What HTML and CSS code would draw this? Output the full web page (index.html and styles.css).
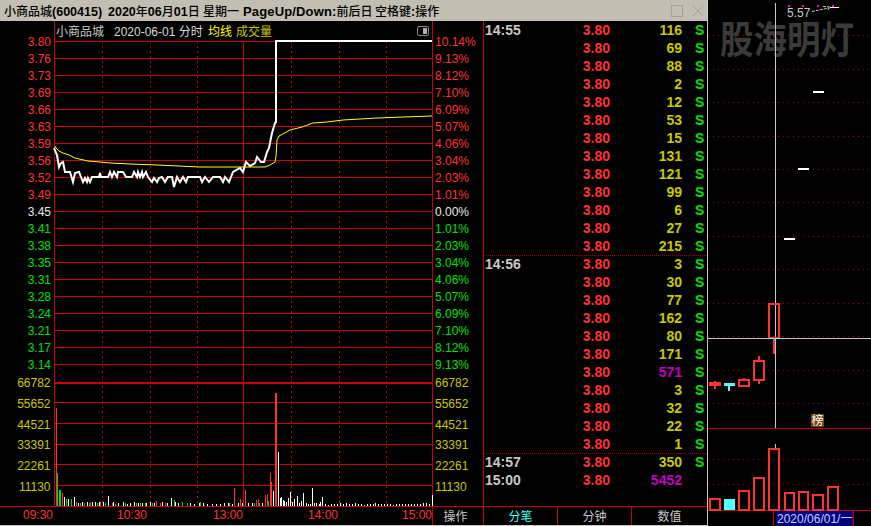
FILE: index.html
```html
<!DOCTYPE html>
<html lang="zh">
<head>
<meta charset="utf-8">
<title>小商品城 分时</title>
<link rel="stylesheet" href="styles.css">
</head>
<body>
<div class="app">
  <div class="win">
    <header class="titlebar">
      <div class="title">
        <div><span>小商品城</span><b>(600415)</b></div>
        <div><b>2020</b><span>年</span><b>06</b><span>月</span><b>01</b><span>日</span></div>
        <div><span>星期一</span></div>
        <div><b class="wide">PageUp/Down:</b><span>前后日</span></div>
        <div><span>空格键</span><b>:</b><span>操作</span></div>
      </div>
      <div class="winbtns">
        <svg class="btn" viewBox="0 0 12 12"><rect x="0.5" y="0.5" width="11" height="11"/></svg>
        <svg class="btn" viewBox="0 0 12 12"><path d="M0.5 0.5L11.5 11.5M11.5 0.5L0.5 11.5"/></svg>
      </div>
    </header>
    <div class="body">
      <svg class="chart" viewBox="0 21 483 486" width="483" height="486">
        <g class="grid">
          <path d="M54 41H432M54 58H432M54 75H432M54 92H432M54 109H432M54 126H432M54 143H432M54 160H432M54 177H432M54 194H432M54 211H432M54 228H432M54 245H432M54 262H432M54 279H432M54 296H432M54 313H432M54 330H432M54 347H432M54 364H432"/>
          <path d="M54 402H432M54 423H432M54 444H432M54 464H432M54 485H432"/>
          <path class="thick" d="M54 383H432"/>
          <path d="M54 21V506M432 21V506M243 41V506M0 506H484"/>
          <path class="dots" d="M102 41V506M150 41V506M197 41V506M291 41V506M339 41V506M386 41V506"/>
        </g>
        <g class="head">
          <text x="56" y="36" class="lt">小商品城</text>
          <text x="114" y="36" class="wh">2020-06-01 分时</text>
          <text x="208" y="36" class="ye">均线</text>
          <text x="236" y="36" class="ol">成交量</text>
        </g>
        <g class="toggle"><rect x="417.500" y="26.500" width="11" height="9" rx="1.500"/><rect class="fill" x="423" y="28" width="4" height="6"/></g>
        <g class="axis left">
          <g class="red">
            <text x="51" y="46">3.80</text><text x="51" y="63">3.76</text><text x="51" y="80">3.73</text><text x="51" y="97">3.69</text><text x="51" y="114">3.66</text><text x="51" y="131">3.63</text><text x="51" y="148">3.59</text><text x="51" y="165">3.56</text><text x="51" y="182">3.52</text><text x="51" y="199">3.49</text>
          </g>
          <text x="51" y="216" class="white">3.45</text>
          <g class="green">
            <text x="51" y="233">3.41</text><text x="51" y="250">3.38</text><text x="51" y="267">3.35</text><text x="51" y="284">3.31</text><text x="51" y="301">3.28</text><text x="51" y="318">3.24</text><text x="51" y="335">3.21</text><text x="51" y="352">3.17</text><text x="51" y="369">3.14</text>
          </g>
          <g class="olive">
            <text x="50.500" y="387">66782</text><text x="50.500" y="408">55652</text><text x="50.500" y="429">44521</text><text x="50.500" y="449">33391</text><text x="50.500" y="470">22261</text><text x="50.500" y="491">11130</text>
          </g>
        </g>
        <g class="axis right">
          <g class="red">
            <text x="435" y="46">10.14%</text><text x="435" y="63">9.13%</text><text x="435" y="80">8.12%</text><text x="435" y="97">7.10%</text><text x="435" y="114">6.09%</text><text x="435" y="131">5.07%</text><text x="435" y="148">4.06%</text><text x="435" y="165">3.04%</text><text x="435" y="182">2.03%</text><text x="435" y="199">1.01%</text>
          </g>
          <text x="435" y="216" class="white">0.00%</text>
          <g class="green">
            <text x="435" y="233">1.01%</text><text x="435" y="250">2.03%</text><text x="435" y="267">3.04%</text><text x="435" y="284">4.06%</text><text x="435" y="301">5.07%</text><text x="435" y="318">6.09%</text><text x="435" y="335">7.10%</text><text x="435" y="352">8.12%</text><text x="435" y="369">9.13%</text>
          </g>
          <g class="olive">
            <text x="435" y="387">66782</text><text x="435" y="408">55652</text><text x="435" y="429">44521</text><text x="435" y="449">33391</text><text x="435" y="470">22261</text><text x="435" y="491">11130</text>
          </g>
        </g>
        <path class="avg" d="M55 146L56 148L59 151L63 153L69 155L75 158L88 161L100 162L110 163L130 164L157 165L200 167L240 167L265 167L270 165L275 162L276 156L277 140L279 136L281 135L290 130L302 127L313 123L327 122L343 120L377 118L403 117L432 116"/>
        <path class="price" d="M54 148L57 155L59 167L61 163L63 162L65 172L70 172L73 182L75 173L79 172L83 182L85 178L87 182L88 178L90 182L92 177L99 177L100 173L101 177L108 177L110 172L112 177L114 172L117 177L118 172L123 172L126 177L132 177L134 172L137 177L138 172L140 177L142 172L143 177L146 172L148 177L152 182L154 178L157 182L159 178L162 177L165 182L168 177L172 177L174 187L177 177L180 182L183 177L186 182L188 177L200 177L202 182L205 177L209 182L213 177L220 177L223 182L225 177L229 182L233 172L240 168L243 172L246 162L250 166L255 163L257 157L261 162L264 162L267 152L269 148L272 133L275 123L276 122L276 41L432 41"/>
        <path class="vol-red" d="M56 506V408M62 506V493M76 506V502M84 506V503M90 506V502M100 506V502M112 506V503M156 506V501M160 506V503M165 506V503M234 506V488M240 506V499M245 506V490M256 506V500M258 506V499M265 506V495M267 506V494M270 506V473M271 506V482M275 506V492"/>
        <path class="vol-red wide" d="M276 506V393"/>
        <path class="vol-green" d="M57 506V473M59 506V490M60 506V490M66 506V499M71 506V499M80 506V503M89 506V503M97 506V503M105 506V503M115 506V504M125 506V503M136 506V503M140 506V503M145 506V503M152 506V503M174 506V500M182 506V502M187 506V503M200 506V502M229 506V503M254 506V503M259 506V503M268 506V501"/>
        <path class="vol-white" d="M64 506V497M68 506V499M74 506V497M78 506V503M82 506V502M87 506V502M92 506V502M95 506V502M99 506V502M103 506V502M108 506V496M113 506V502M118 506V503M123 506V502M127 506V504M130 506V503M134 506V502M138 506V503M142 506V503M146 506V503M150 506V502M154 506V503M162 506V502M167 506V503M171 506V498M175 506V502M178 506V503M190 506V503M194 506V504M199 506V503M203 506V503M207 506V504M212 506V504M216 506V504M220 506V504M224 506V503M228 506V503M232 506V504M238 506V503M242 506V503M248 506V503M252 506V503M262 506V503M273 506V491M278 506V452M280 506V498M281 506V497M283 506V500M284 506V501M286 506V502M288 506V498M290 506V492M292 506V502M294 506V499M297 506V496M299 506V503M301 506V501M303 506V493M306 506V503M308 506V504M310 506V504M312 506V488M314 506V503M316 506V503M319 506V504M320 506V502M322 506V497M325 506V504M328 506V505M331 506V504M334 506V504M337 506V504M340 506V503M343 506V504M346 506V503M349 506V504M352 506V504M355 506V503M358 506V504M361 506V504M364 506V505M367 506V504M370 506V504M373 506V504M375 506V503M378 506V504M381 506V504M384 506V504M387 506V504M390 506V504M393 506V505M396 506V504M399 506V504M402 506V504M405 506V504M408 506V504M411 506V504M414 506V504M417 506V504M420 506V504M423 506V503M426 506V503M429 506V504M432 506V495"/>
      </svg>
      <div class="ticks">
        <div class="row"><span class="time">14:55</span><span class="pr">3.80</span><span class="vo">116</span><span class="s">S</span></div>
        <div class="row"><span class="time"></span><span class="pr">3.80</span><span class="vo">69</span><span class="s">S</span></div>
        <div class="row"><span class="time"></span><span class="pr">3.80</span><span class="vo">88</span><span class="s">S</span></div>
        <div class="row"><span class="time"></span><span class="pr">3.80</span><span class="vo">2</span><span class="s">S</span></div>
        <div class="row"><span class="time"></span><span class="pr">3.80</span><span class="vo">12</span><span class="s">S</span></div>
        <div class="row"><span class="time"></span><span class="pr">3.80</span><span class="vo">53</span><span class="s">S</span></div>
        <div class="row"><span class="time"></span><span class="pr">3.80</span><span class="vo">15</span><span class="s">S</span></div>
        <div class="row"><span class="time"></span><span class="pr">3.80</span><span class="vo">131</span><span class="s">S</span></div>
        <div class="row"><span class="time"></span><span class="pr">3.80</span><span class="vo">121</span><span class="s">S</span></div>
        <div class="row"><span class="time"></span><span class="pr">3.80</span><span class="vo">99</span><span class="s">S</span></div>
        <div class="row"><span class="time"></span><span class="pr">3.80</span><span class="vo">6</span><span class="s">S</span></div>
        <div class="row"><span class="time"></span><span class="pr">3.80</span><span class="vo">27</span><span class="s">S</span></div>
        <div class="row"><span class="time"></span><span class="pr">3.80</span><span class="vo">215</span><span class="s">S</span></div>
        <div class="row sep"><span class="time">14:56</span><span class="pr">3.80</span><span class="vo">3</span><span class="s">S</span></div>
        <div class="row"><span class="time"></span><span class="pr">3.80</span><span class="vo">30</span><span class="s">S</span></div>
        <div class="row"><span class="time"></span><span class="pr">3.80</span><span class="vo">77</span><span class="s">S</span></div>
        <div class="row"><span class="time"></span><span class="pr">3.80</span><span class="vo">162</span><span class="s">S</span></div>
        <div class="row"><span class="time"></span><span class="pr">3.80</span><span class="vo">80</span><span class="s">S</span></div>
        <div class="row"><span class="time"></span><span class="pr">3.80</span><span class="vo">171</span><span class="s">S</span></div>
        <div class="row"><span class="time"></span><span class="pr">3.80</span><span class="vo big">571</span><span class="s">S</span></div>
        <div class="row"><span class="time"></span><span class="pr">3.80</span><span class="vo">3</span><span class="s">S</span></div>
        <div class="row"><span class="time"></span><span class="pr">3.80</span><span class="vo">32</span><span class="s">S</span></div>
        <div class="row"><span class="time"></span><span class="pr">3.80</span><span class="vo">22</span><span class="s">S</span></div>
        <div class="row"><span class="time"></span><span class="pr">3.80</span><span class="vo">1</span><span class="s">S</span></div>
        <div class="row sep"><span class="time">14:57</span><span class="pr">3.80</span><span class="vo">350</span><span class="s">S</span></div>
        <div class="row"><span class="time">15:00</span><span class="pr">3.80</span><span class="vo big">5452</span><span class="s"></span></div>
      </div>
    </div>
    <footer class="footer">
      <div class="times"><span>09:30</span><span>10:30</span><span>13:00</span><span>14:00</span><span>15:00</span></div>
      <div class="tab op">操作</div>
      <div class="tab active">分笔</div>
      <div class="tab">分钟</div>
      <div class="tab">数值</div>
    </footer>
  </div>
  <svg class="kline" viewBox="708 0 163 526" width="163" height="526">
    <path class="kdots" d="M708 35H871M708 69H871M708 102H871M708 136H871M708 169H871M708 202H871M708 236H871M708 269H871M708 303H871M708 336H871M708 370H871M708 403H871M708 459H871M708 484H871"/>
    <text class="mark" transform="translate(720 53) scale(1 1.12)">股海明灯</text>
    <path class="cross" d="M775.500 3V428M775.500 444V449M708 338.500H871"/>
    <path class="solid" d="M708 428.500H871M708 510.500H871M773.500 510V526M853.500 510V526"/>
    <text class="hi" x="787" y="17">5.57</text>
    <path class="arrow" d="M812 11.500L829 8M823 6.500L830 7L827 11"/>
    <path class="dash thin" d="M830 7.500H839"/>
    <path class="pin" d="M788 5h2v2h-2zM802 5h2v2h-2zM817 5h2v2h-2zM832 5h2v2h-2z"/>
    <path class="dash" d="M813 91.500H824M798 168.500H809M784 238.500H795"/>
    <path class="can-solid" d="M709 382h12v4h-12zM714 381h2v8h-2z"/>
    <path class="can-cyan" d="M724 383h11v3h-11zM728 386h2v5h-2z"/>
    <path class="can" d="M739 380h10v6h-10zM744 378v2M744 386v1M754 361h10v19h-10zM759 356v5M759 380v4M769 304h10v34h-10zM774 338v16"/>
    <path class="cyan-line" d="M768 338.500H780"/>
    <g class="badge"><rect x="811" y="414" width="13" height="13"/><text x="817.500" y="425">榜</text></g>
    <path class="can" d="M710 499h10v11h-10zM739 491h10v19h-10zM754 478h10v32h-10zM769 449h10v61h-10zM785 493h9v17h-9zM799 492h9v18h-9zM813 495h10v15h-10zM828 487h10v23h-10z"/>
    <rect class="can-fill" x="724" y="499" width="11" height="11"/>
    <rect class="datebox" x="776" y="511" width="77" height="15"/>
    <text class="date" x="777" y="523">2020/06/01/一</text>
  </svg>
</div>
</body>
</html>
```
FILE: styles.css
```css
html, body { margin: 0; padding: 0; background: #000; }
body { width: 871px; height: 526px; overflow: hidden; font-family: "Liberation Sans", "Noto Sans CJK SC", sans-serif; }
.app { display: flex; width: 871px; height: 526px; background: #000; }
.win { width: 707px; flex: none; display: flex; flex-direction: column; }
.titlebar { height: 21px; flex: none; background: #c2beb2; display: flex; justify-content: space-between; align-items: center; color: #000; }
.title { padding-left: 4px; display: grid; grid-template-columns: 104px 95px 40px 132px 70px; font-size: 12px; white-space: nowrap; font-family: "Noto Sans CJK SC", sans-serif; font-weight: 500; }
.title b { font-family: "Liberation Sans", sans-serif; font-weight: 700; font-size: 12.5px; }
.title b.wide { font-size: 13px; letter-spacing: 0.15px; }
.winbtns { display: flex; gap: 9px; padding-right: 3px; }
.btn { width: 12px; height: 12px; display: block; }
.btn rect, .btn path { fill: none; stroke: #a5a199; stroke-width: 1; }
.body { display: flex; height: 486px; flex: none; }
.chart { display: block; flex: none; }
.grid path { fill: none; stroke: #c80000; stroke-width: 1; shape-rendering: crispEdges; }
.grid .thick { stroke-width: 2; }
.grid .dots { stroke-dasharray: 2 3; }
.head text { font-size: 12px; font-family: "Noto Sans CJK SC", sans-serif; }
.head .wh { font-family: "Liberation Sans", "Noto Sans CJK SC", sans-serif; fill: #d8d8d8; }
.head .lt { fill: #c8c8c8; }
.head .ye { fill: #ffff00; }
.head .ol { fill: #c8c800; }
.toggle rect { fill: none; stroke: #8a8a8a; }
.toggle .fill { fill: #b0b0b0; stroke: none; }
.axis text { font-size: 12px; }
.axis.left text { text-anchor: end; }
.axis .red text { fill: #ff3232; }
.axis .green text { fill: #00e000; }
.axis .olive text { fill: #c8c800; }
.axis .white { fill: #e8e8e8; }
.avg { fill: none; stroke: #ffff00; stroke-width: 1; }
.price { fill: none; stroke: #fff; stroke-width: 2; stroke-linejoin: miter; }
.vol-red, .vol-green, .vol-white { fill: none; stroke-width: 1; shape-rendering: crispEdges; }
.vol-red { stroke: #ff3232; }
.vol-red.wide { stroke-width: 2; }
.vol-green { stroke: #00e000; }
.vol-white { stroke: #fff; }
.ticks { width: 224px; flex: none; box-sizing: border-box; border-left: 1px solid #c80000; border-bottom: 1px solid #c80000; font-weight: 700; font-size: 14px; }
.row { display: grid; grid-template-columns: 41px 84px 72px 21px; height: 18px; line-height: 18px; box-sizing: border-box; padding-left: 1px; }
.row.sep { border-top: 1px dotted #a00000; line-height: 17px; }
.time { color: #c8c8c8; }
.pr { color: #ff3232; text-align: right; }
.vo { color: #c8c800; text-align: right; }
.vo.big { color: #c000c0; }
.s { color: #00e000; padding-left: 13px; }
.footer { display: flex; height: 18px; flex: none; border-bottom: 1px solid #c8c8c8; box-sizing: content-box; font-size: 12px; line-height: 17px; }
.times { width: 432px; flex: none; display: grid; grid-template-columns: 53px 94px 96px 95px 94px; color: #ff3232; font-size: 12px; }
.times span { text-align: right; }
.tab { width: 74px; flex: none; box-sizing: border-box; border-right: 1px solid #c80000; color: #c8c8c8; text-align: center; font-family: "Noto Sans CJK SC", sans-serif; font-size: 12px; }
.tab.op { width: 52px; border-left: 1px solid #c80000; padding-right: 5px; }
.tab.active { color: #40ffff; }
.tab:last-child { width: 75px; border-right: 0; }
.kline { display: block; flex: none; border-left: 1px solid #c8c8c8; }
.kdots { fill: none; stroke: #a00000; stroke-dasharray: 1 4; shape-rendering: crispEdges; }
.mark { font-family: "Noto Sans CJK SC", sans-serif; font-weight: 700; font-size: 33.500px; fill: #3a3a3a; }
.cross { fill: none; stroke: #c8c8c8; stroke-width: 1; shape-rendering: crispEdges; }
.solid { fill: none; stroke: #c80000; stroke-width: 1; shape-rendering: crispEdges; }
.hi { font-size: 12px; fill: #c8c8c8; }
.arrow { fill: none; stroke: #c8c8c8; stroke-width: 1; stroke-dasharray: 3 1; }
.pin { fill: #ff00ff; }
.dash { fill: none; stroke: #fff; stroke-width: 2; shape-rendering: crispEdges; }
.dash.thin { stroke-width: 1; }
.can-solid { fill: #ff3232; }
.can-cyan { fill: #54ffff; }
.can { fill: none; stroke: #ff3232; stroke-width: 2; shape-rendering: crispEdges; }
.cyan-line { stroke: #54ffff; stroke-width: 1; shape-rendering: crispEdges; }
.can-fill { fill: #54ffff; }
.badge rect { fill: #7b3f10; }
.badge text { fill: #fff; font-size: 12px; text-anchor: middle; font-family: "Noto Sans CJK SC", sans-serif; }
.datebox { fill: #000080; }
.date { font-size: 12px; fill: #c8d4ff; }
```
